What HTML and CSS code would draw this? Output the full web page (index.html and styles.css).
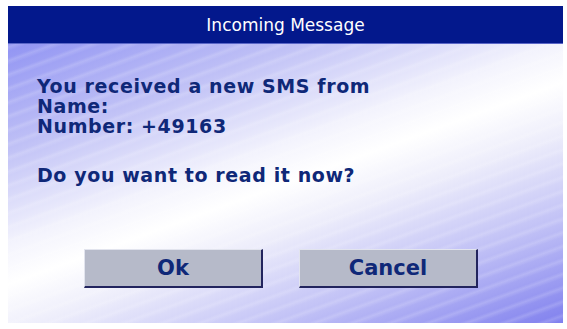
FILE: index.html
```html
<!DOCTYPE html>
<html>
<head>
<meta charset="utf-8">
<link rel="stylesheet" href="styles.css">
</head>
<body>
<div class="dialog">
  <div class="titlebar">Incoming Message</div>
  <div class="body">
    <div class="message">
      <div class="line">You received a new SMS from</div>
      <div class="line">Name:</div>
      <div class="line">Number: +49163</div>
      <div class="line gap">Do you want to read it now?</div>
    </div>
    <div class="buttons">
      <div class="btn">Ok</div>
      <div class="btn">Cancel</div>
    </div>
  </div>
</div>
</body>
</html>
```

FILE: styles.css
```css
html, body {
  margin: 0;
  padding: 0;
  background: #ffffff;
}
body {
  padding: 6px 4px 6px 8px;
  font-family: "DejaVu Sans", sans-serif;
}
.dialog {
  width: 555px;
  height: 317px;
  display: flex;
  flex-direction: column;
}
.titlebar {
  height: 37px;
  background: #03188c;
  border-bottom: 1px solid #5a66c8;
  color: #ffffff;
  font-size: 17px;
  display: flex;
  align-items: center;
  justify-content: center;
}
.body {
  flex: 1;
  display: flex;
  flex-direction: column;
  background:
    repeating-linear-gradient(160deg, rgba(255,255,255,0) 0px, rgba(255,255,255,0.16) 3px, rgba(255,255,255,0) 7px, rgba(255,255,255,0) 13px),
    linear-gradient(160deg, #9194f3 0%, #c0c1f6 22%, #f4f4fd 42%, #ffffff 50%, #eeeefb 60%, #c2c2f6 78%, #8080ee 100%);
}
.message {
  padding: 32px 0 0 29px;
  color: #0f2878;
  font-weight: bold;
  font-size: 19px;
  letter-spacing: 0.6px;
  line-height: 20px;
}
.gap {
  margin-top: 29px;
}
.buttons {
  margin-top: auto;
  display: flex;
  gap: 36px;
  padding: 0 0 35px 76px;
}
.btn {
  box-sizing: border-box;
  width: 179px;
  height: 39px;
  background: #b6bac9;
  border-top: 1px solid #e2e4ee;
  border-left: 1px solid #e2e4ee;
  border-right: 2px solid #22245e;
  border-bottom: 2px solid #22245e;
  color: #0f2878;
  font-weight: bold;
  font-size: 21px;
  display: flex;
  align-items: center;
  justify-content: center;
}
```
